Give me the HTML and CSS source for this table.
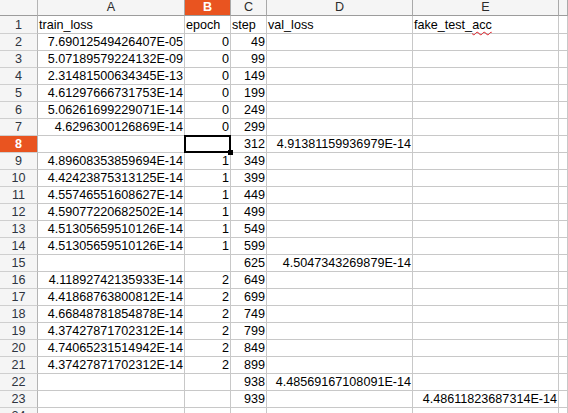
FILE: index.html
```html
<!DOCTYPE html>
<html>
<head>
<meta charset="utf-8">
<link rel="stylesheet" href="styles.css">
</head>
<body>
<div class="sheet">
  <div class="ch corner"></div><div class="ch">A</div><div class="ch active">B</div><div class="ch">C</div><div class="ch">D</div><div class="ch">E</div><div class="ch"></div>

  <div class="rh">1</div><div class="c">train_loss</div><div class="c">epoch</div><div class="c">step</div><div class="c">val_loss</div><div class="c">fake_test_<span class="spell">acc</span></div><div class="c"></div>
  <div class="rh">2</div><div class="c n">7.69012549426407E-05</div><div class="c n">0</div><div class="c n">49</div><div class="c"></div><div class="c"></div><div class="c"></div>
  <div class="rh">3</div><div class="c n">5.07189579224132E-09</div><div class="c n">0</div><div class="c n">99</div><div class="c"></div><div class="c"></div><div class="c"></div>
  <div class="rh">4</div><div class="c n">2.31481500634345E-13</div><div class="c n">0</div><div class="c n">149</div><div class="c"></div><div class="c"></div><div class="c"></div>
  <div class="rh">5</div><div class="c n">4.61297666731753E-14</div><div class="c n">0</div><div class="c n">199</div><div class="c"></div><div class="c"></div><div class="c"></div>
  <div class="rh">6</div><div class="c n">5.06261699229071E-14</div><div class="c n">0</div><div class="c n">249</div><div class="c"></div><div class="c"></div><div class="c"></div>
  <div class="rh">7</div><div class="c n">4.6296300126869E-14</div><div class="c n">0</div><div class="c n">299</div><div class="c"></div><div class="c"></div><div class="c"></div>
  <div class="rh active">8</div><div class="c"></div><div class="c sel"></div><div class="c n">312</div><div class="c n">4.91381159936979E-14</div><div class="c"></div><div class="c"></div>
  <div class="rh">9</div><div class="c n">4.89608353859694E-14</div><div class="c n">1</div><div class="c n">349</div><div class="c"></div><div class="c"></div><div class="c"></div>
  <div class="rh">10</div><div class="c n">4.42423875313125E-14</div><div class="c n">1</div><div class="c n">399</div><div class="c"></div><div class="c"></div><div class="c"></div>
  <div class="rh">11</div><div class="c n">4.55746551608627E-14</div><div class="c n">1</div><div class="c n">449</div><div class="c"></div><div class="c"></div><div class="c"></div>
  <div class="rh">12</div><div class="c n">4.59077220682502E-14</div><div class="c n">1</div><div class="c n">499</div><div class="c"></div><div class="c"></div><div class="c"></div>
  <div class="rh">13</div><div class="c n">4.51305659510126E-14</div><div class="c n">1</div><div class="c n">549</div><div class="c"></div><div class="c"></div><div class="c"></div>
  <div class="rh">14</div><div class="c n">4.51305659510126E-14</div><div class="c n">1</div><div class="c n">599</div><div class="c"></div><div class="c"></div><div class="c"></div>
  <div class="rh">15</div><div class="c"></div><div class="c"></div><div class="c n">625</div><div class="c n">4.5047343269879E-14</div><div class="c"></div><div class="c"></div>
  <div class="rh">16</div><div class="c n">4.11892742135933E-14</div><div class="c n">2</div><div class="c n">649</div><div class="c"></div><div class="c"></div><div class="c"></div>
  <div class="rh">17</div><div class="c n">4.41868763800812E-14</div><div class="c n">2</div><div class="c n">699</div><div class="c"></div><div class="c"></div><div class="c"></div>
  <div class="rh">18</div><div class="c n">4.66848781854878E-14</div><div class="c n">2</div><div class="c n">749</div><div class="c"></div><div class="c"></div><div class="c"></div>
  <div class="rh">19</div><div class="c n">4.37427871702312E-14</div><div class="c n">2</div><div class="c n">799</div><div class="c"></div><div class="c"></div><div class="c"></div>
  <div class="rh">20</div><div class="c n">4.74065231514942E-14</div><div class="c n">2</div><div class="c n">849</div><div class="c"></div><div class="c"></div><div class="c"></div>
  <div class="rh">21</div><div class="c n">4.37427871702312E-14</div><div class="c n">2</div><div class="c n">899</div><div class="c"></div><div class="c"></div><div class="c"></div>
  <div class="rh">22</div><div class="c"></div><div class="c"></div><div class="c n">938</div><div class="c n">4.48569167108091E-14</div><div class="c"></div><div class="c"></div>
  <div class="rh">23</div><div class="c"></div><div class="c"></div><div class="c n">939</div><div class="c"></div><div class="c n">4.48611823687314E-14</div><div class="c"></div>
  <div class="rh">24</div><div class="c"></div><div class="c"></div><div class="c"></div><div class="c"></div><div class="c"></div><div class="c"></div>
</div>
</body>
</html>
```

FILE: styles.css
```css
html, body {
  margin: 0;
  padding: 0;
  background: #ffffff;
  overflow: hidden;
}

.sheet {
  display: grid;
  grid-template-columns: 38px 147px 46px 36px 146px 146px 1fr;
  grid-template-rows: 16px 18px repeat(23, 17px);
  width: 568px;
  height: 413px;
  overflow: hidden;
  font-family: "Liberation Sans", Arial, sans-serif;
  font-size: 12.6px;
  color: #000000;
}

.sheet > div {
  box-sizing: border-box;
  white-space: nowrap;
  overflow: visible;
}

.ch {
  background: #f5f5f5;
  border-right: 1px solid #a9a9a9;
  border-bottom: 1px solid #9c9c9c;
  text-align: center;
  line-height: 15px;
  color: #2b2b2b;
}

.ch.corner {
  border-right-color: #b4b4b4;
}

.rh {
  background: #f5f5f5;
  border-right: 1px solid #b4b4b4;
  border-bottom: 1px solid #cfcfcf;
  text-align: center;
  line-height: 16px;
  color: #2e3440;
  display: flex;
  align-items: flex-end;
  justify-content: center;
}

.c {
  border-right: 1px solid #c8c8c8;
  border-bottom: 1px solid #c8c8c8;
  padding: 0 1px;
  line-height: 16px;
  display: flex;
  align-items: flex-end;
}

.n {
  justify-content: flex-end;
}

.active {
  background: #e95420;
  color: #ffffff;
  font-weight: bold;
}

.spell {
  text-decoration: underline wavy #e01b24;
  text-decoration-thickness: 1px;
  text-underline-offset: 2px;
}

.sel {
  position: relative;
}

.sel::before {
  content: "";
  position: absolute;
  left: -1px;
  top: -1px;
  right: -1px;
  bottom: -1px;
  border: 2px solid #000000;
}

.sel::after {
  content: "";
  position: absolute;
  right: -3px;
  bottom: -3px;
  width: 5px;
  height: 5px;
  background: #000000;
}
```
